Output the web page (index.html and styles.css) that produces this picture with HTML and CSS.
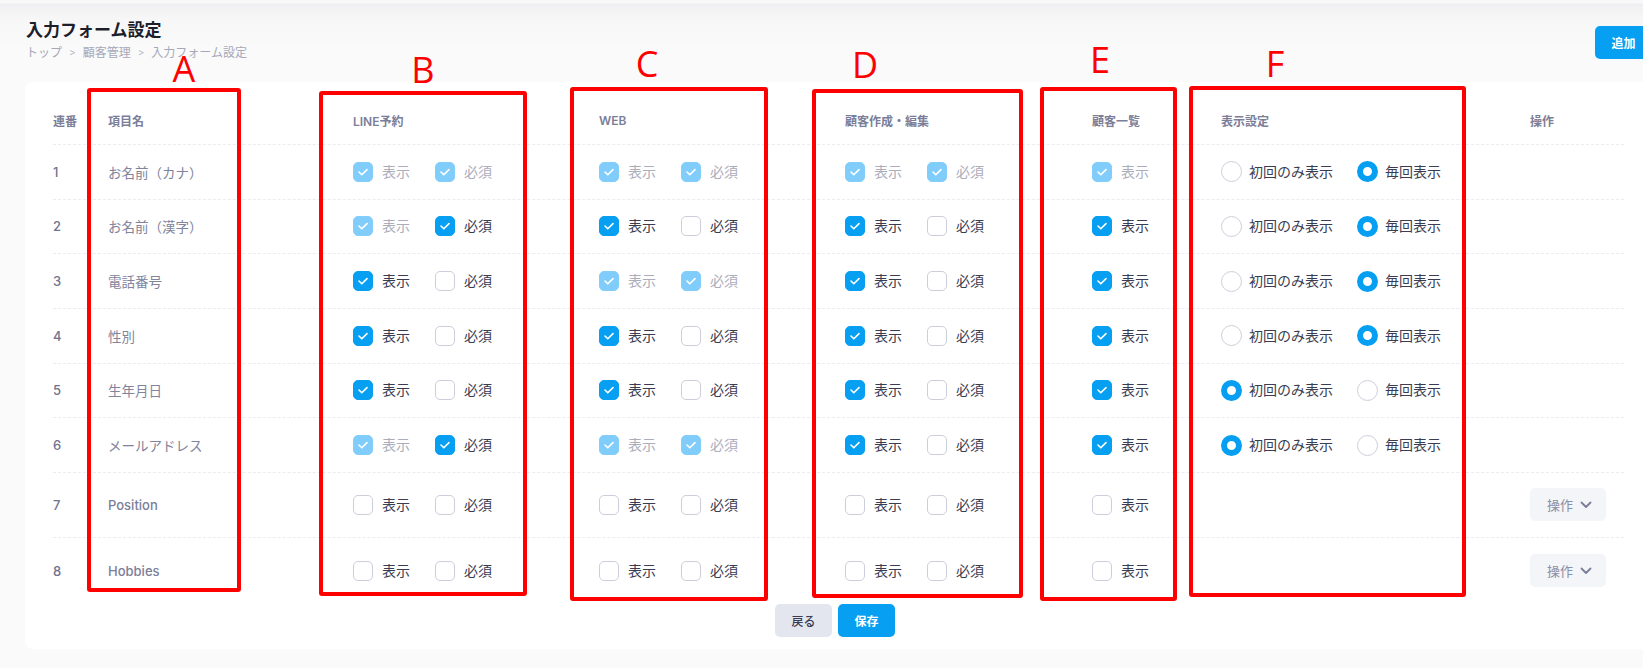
FILE: index.html
```html
<!DOCTYPE html>
<html lang="ja">
<head>
<meta charset="utf-8">
<title>入力フォーム設定</title>
<link rel="stylesheet" href="styles.css">
</head>
<body>
<div class="page">
  <header class="head">
    <div class="head-text">
      <h1 class="title">入力フォーム設定</h1>
      <nav class="crumbs"><span>トップ</span><span class="sep">&gt;</span><span>顧客管理</span><span class="sep">&gt;</span><span>入力フォーム設定</span></nav>
    </div>
    <button class="btn btn-primary add">追加</button>
  </header>

  <section class="card">
    <div class="row hrow">
      <div class="hc">連番</div>
      <div class="hc">項目名</div>
      <div class="hc">LINE予約</div>
      <div class="hc">WEB</div>
      <div class="hc">顧客作成・編集</div>
      <div class="hc">顧客一覧</div>
      <div class="hc">表示設定</div>
      <div class="hc">操作</div>
    </div>

    <!-- 1 -->
    <div class="row r">
      <div class="num">1</div>
      <div class="name">お名前（カナ）</div>
      <div class="opts">
        <span class="opt dis"><span class="cb on"><svg viewBox="0 0 20 20"><polyline points="6,10 8.8,12.8 14,7.6"/></svg></span><span class="lbl">表示</span></span>
        <span class="opt dis"><span class="cb on"><svg viewBox="0 0 20 20"><polyline points="6,10 8.8,12.8 14,7.6"/></svg></span><span class="lbl">必須</span></span>
      </div>
      <div class="opts">
        <span class="opt dis"><span class="cb on"><svg viewBox="0 0 20 20"><polyline points="6,10 8.8,12.8 14,7.6"/></svg></span><span class="lbl">表示</span></span>
        <span class="opt dis"><span class="cb on"><svg viewBox="0 0 20 20"><polyline points="6,10 8.8,12.8 14,7.6"/></svg></span><span class="lbl">必須</span></span>
      </div>
      <div class="opts">
        <span class="opt dis"><span class="cb on"><svg viewBox="0 0 20 20"><polyline points="6,10 8.8,12.8 14,7.6"/></svg></span><span class="lbl">表示</span></span>
        <span class="opt dis"><span class="cb on"><svg viewBox="0 0 20 20"><polyline points="6,10 8.8,12.8 14,7.6"/></svg></span><span class="lbl">必須</span></span>
      </div>
      <div class="opts">
        <span class="opt dis"><span class="cb on"><svg viewBox="0 0 20 20"><polyline points="6,10 8.8,12.8 14,7.6"/></svg></span><span class="lbl">表示</span></span>
      </div>
      <div class="opts radios">
        <span class="opt"><span class="rd"></span><span class="lbl">初回のみ表示</span></span>
        <span class="opt"><span class="rd on"></span><span class="lbl">毎回表示</span></span>
      </div>
      <div></div>
    </div>

    <!-- 2 -->
    <div class="row r">
      <div class="num">2</div>
      <div class="name">お名前（漢字）</div>
      <div class="opts">
        <span class="opt dis"><span class="cb on"><svg viewBox="0 0 20 20"><polyline points="6,10 8.8,12.8 14,7.6"/></svg></span><span class="lbl">表示</span></span>
        <span class="opt"><span class="cb on"><svg viewBox="0 0 20 20"><polyline points="6,10 8.8,12.8 14,7.6"/></svg></span><span class="lbl">必須</span></span>
      </div>
      <div class="opts">
        <span class="opt"><span class="cb on"><svg viewBox="0 0 20 20"><polyline points="6,10 8.8,12.8 14,7.6"/></svg></span><span class="lbl">表示</span></span>
        <span class="opt"><span class="cb"></span><span class="lbl">必須</span></span>
      </div>
      <div class="opts">
        <span class="opt"><span class="cb on"><svg viewBox="0 0 20 20"><polyline points="6,10 8.8,12.8 14,7.6"/></svg></span><span class="lbl">表示</span></span>
        <span class="opt"><span class="cb"></span><span class="lbl">必須</span></span>
      </div>
      <div class="opts">
        <span class="opt"><span class="cb on"><svg viewBox="0 0 20 20"><polyline points="6,10 8.8,12.8 14,7.6"/></svg></span><span class="lbl">表示</span></span>
      </div>
      <div class="opts radios">
        <span class="opt"><span class="rd"></span><span class="lbl">初回のみ表示</span></span>
        <span class="opt"><span class="rd on"></span><span class="lbl">毎回表示</span></span>
      </div>
      <div></div>
    </div>

    <!-- 3 -->
    <div class="row r">
      <div class="num">3</div>
      <div class="name">電話番号</div>
      <div class="opts">
        <span class="opt"><span class="cb on"><svg viewBox="0 0 20 20"><polyline points="6,10 8.8,12.8 14,7.6"/></svg></span><span class="lbl">表示</span></span>
        <span class="opt"><span class="cb"></span><span class="lbl">必須</span></span>
      </div>
      <div class="opts">
        <span class="opt dis"><span class="cb on"><svg viewBox="0 0 20 20"><polyline points="6,10 8.8,12.8 14,7.6"/></svg></span><span class="lbl">表示</span></span>
        <span class="opt dis"><span class="cb on"><svg viewBox="0 0 20 20"><polyline points="6,10 8.8,12.8 14,7.6"/></svg></span><span class="lbl">必須</span></span>
      </div>
      <div class="opts">
        <span class="opt"><span class="cb on"><svg viewBox="0 0 20 20"><polyline points="6,10 8.8,12.8 14,7.6"/></svg></span><span class="lbl">表示</span></span>
        <span class="opt"><span class="cb"></span><span class="lbl">必須</span></span>
      </div>
      <div class="opts">
        <span class="opt"><span class="cb on"><svg viewBox="0 0 20 20"><polyline points="6,10 8.8,12.8 14,7.6"/></svg></span><span class="lbl">表示</span></span>
      </div>
      <div class="opts radios">
        <span class="opt"><span class="rd"></span><span class="lbl">初回のみ表示</span></span>
        <span class="opt"><span class="rd on"></span><span class="lbl">毎回表示</span></span>
      </div>
      <div></div>
    </div>

    <!-- 4 -->
    <div class="row r">
      <div class="num">4</div>
      <div class="name">性別</div>
      <div class="opts">
        <span class="opt"><span class="cb on"><svg viewBox="0 0 20 20"><polyline points="6,10 8.8,12.8 14,7.6"/></svg></span><span class="lbl">表示</span></span>
        <span class="opt"><span class="cb"></span><span class="lbl">必須</span></span>
      </div>
      <div class="opts">
        <span class="opt"><span class="cb on"><svg viewBox="0 0 20 20"><polyline points="6,10 8.8,12.8 14,7.6"/></svg></span><span class="lbl">表示</span></span>
        <span class="opt"><span class="cb"></span><span class="lbl">必須</span></span>
      </div>
      <div class="opts">
        <span class="opt"><span class="cb on"><svg viewBox="0 0 20 20"><polyline points="6,10 8.8,12.8 14,7.6"/></svg></span><span class="lbl">表示</span></span>
        <span class="opt"><span class="cb"></span><span class="lbl">必須</span></span>
      </div>
      <div class="opts">
        <span class="opt"><span class="cb on"><svg viewBox="0 0 20 20"><polyline points="6,10 8.8,12.8 14,7.6"/></svg></span><span class="lbl">表示</span></span>
      </div>
      <div class="opts radios">
        <span class="opt"><span class="rd"></span><span class="lbl">初回のみ表示</span></span>
        <span class="opt"><span class="rd on"></span><span class="lbl">毎回表示</span></span>
      </div>
      <div></div>
    </div>

    <!-- 5 -->
    <div class="row r">
      <div class="num">5</div>
      <div class="name">生年月日</div>
      <div class="opts">
        <span class="opt"><span class="cb on"><svg viewBox="0 0 20 20"><polyline points="6,10 8.8,12.8 14,7.6"/></svg></span><span class="lbl">表示</span></span>
        <span class="opt"><span class="cb"></span><span class="lbl">必須</span></span>
      </div>
      <div class="opts">
        <span class="opt"><span class="cb on"><svg viewBox="0 0 20 20"><polyline points="6,10 8.8,12.8 14,7.6"/></svg></span><span class="lbl">表示</span></span>
        <span class="opt"><span class="cb"></span><span class="lbl">必須</span></span>
      </div>
      <div class="opts">
        <span class="opt"><span class="cb on"><svg viewBox="0 0 20 20"><polyline points="6,10 8.8,12.8 14,7.6"/></svg></span><span class="lbl">表示</span></span>
        <span class="opt"><span class="cb"></span><span class="lbl">必須</span></span>
      </div>
      <div class="opts">
        <span class="opt"><span class="cb on"><svg viewBox="0 0 20 20"><polyline points="6,10 8.8,12.8 14,7.6"/></svg></span><span class="lbl">表示</span></span>
      </div>
      <div class="opts radios">
        <span class="opt"><span class="rd on"></span><span class="lbl">初回のみ表示</span></span>
        <span class="opt"><span class="rd"></span><span class="lbl">毎回表示</span></span>
      </div>
      <div></div>
    </div>

    <!-- 6 -->
    <div class="row r">
      <div class="num">6</div>
      <div class="name">メールアドレス</div>
      <div class="opts">
        <span class="opt dis"><span class="cb on"><svg viewBox="0 0 20 20"><polyline points="6,10 8.8,12.8 14,7.6"/></svg></span><span class="lbl">表示</span></span>
        <span class="opt"><span class="cb on"><svg viewBox="0 0 20 20"><polyline points="6,10 8.8,12.8 14,7.6"/></svg></span><span class="lbl">必須</span></span>
      </div>
      <div class="opts">
        <span class="opt dis"><span class="cb on"><svg viewBox="0 0 20 20"><polyline points="6,10 8.8,12.8 14,7.6"/></svg></span><span class="lbl">表示</span></span>
        <span class="opt dis"><span class="cb on"><svg viewBox="0 0 20 20"><polyline points="6,10 8.8,12.8 14,7.6"/></svg></span><span class="lbl">必須</span></span>
      </div>
      <div class="opts">
        <span class="opt"><span class="cb on"><svg viewBox="0 0 20 20"><polyline points="6,10 8.8,12.8 14,7.6"/></svg></span><span class="lbl">表示</span></span>
        <span class="opt"><span class="cb"></span><span class="lbl">必須</span></span>
      </div>
      <div class="opts">
        <span class="opt"><span class="cb on"><svg viewBox="0 0 20 20"><polyline points="6,10 8.8,12.8 14,7.6"/></svg></span><span class="lbl">表示</span></span>
      </div>
      <div class="opts radios">
        <span class="opt"><span class="rd on"></span><span class="lbl">初回のみ表示</span></span>
        <span class="opt"><span class="rd"></span><span class="lbl">毎回表示</span></span>
      </div>
      <div></div>
    </div>

    <!-- 7 -->
    <div class="row r tall">
      <div class="num">7</div>
      <div class="name latin">Position</div>
      <div class="opts">
        <span class="opt"><span class="cb"></span><span class="lbl">表示</span></span>
        <span class="opt"><span class="cb"></span><span class="lbl">必須</span></span>
      </div>
      <div class="opts">
        <span class="opt"><span class="cb"></span><span class="lbl">表示</span></span>
        <span class="opt"><span class="cb"></span><span class="lbl">必須</span></span>
      </div>
      <div class="opts">
        <span class="opt"><span class="cb"></span><span class="lbl">表示</span></span>
        <span class="opt"><span class="cb"></span><span class="lbl">必須</span></span>
      </div>
      <div class="opts">
        <span class="opt"><span class="cb"></span><span class="lbl">表示</span></span>
      </div>
      <div></div>
      <div><button class="ops">操作<svg class="chev" viewBox="0 0 12 8"><polyline points="1.5,1.5 6,6 10.5,1.5"/></svg></button></div>
    </div>

    <!-- 8 -->
    <div class="row r last">
      <div class="num">8</div>
      <div class="name latin">Hobbies</div>
      <div class="opts">
        <span class="opt"><span class="cb"></span><span class="lbl">表示</span></span>
        <span class="opt"><span class="cb"></span><span class="lbl">必須</span></span>
      </div>
      <div class="opts">
        <span class="opt"><span class="cb"></span><span class="lbl">表示</span></span>
        <span class="opt"><span class="cb"></span><span class="lbl">必須</span></span>
      </div>
      <div class="opts">
        <span class="opt"><span class="cb"></span><span class="lbl">表示</span></span>
        <span class="opt"><span class="cb"></span><span class="lbl">必須</span></span>
      </div>
      <div class="opts">
        <span class="opt"><span class="cb"></span><span class="lbl">表示</span></span>
      </div>
      <div></div>
      <div><button class="ops">操作<svg class="chev" viewBox="0 0 12 8"><polyline points="1.5,1.5 6,6 10.5,1.5"/></svg></button></div>
    </div>

    <div class="foot">
      <button class="btn btn-gray">戻る</button>
      <button class="btn btn-primary">保存</button>
    </div>
  </section>

  <div class="ann-box box-a"></div>
  <div class="ann-box box-b"></div>
  <div class="ann-box box-c"></div>
  <div class="ann-box box-d"></div>
  <div class="ann-box box-e"></div>
  <div class="ann-box box-f"></div>
  <span class="ann-letter let-a">A</span>
  <span class="ann-letter let-b">B</span>
  <span class="ann-letter let-c">C</span>
  <span class="ann-letter let-d">D</span>
  <span class="ann-letter let-e">E</span>
  <span class="ann-letter let-f">F</span>
</div>
</body>
</html>
```

FILE: styles.css
```css
* { box-sizing: border-box; margin: 0; padding: 0; }
html, body { overflow: hidden; }
body {
  font-family: Inter, "Noto Sans CJK JP", sans-serif;
  background: linear-gradient(to bottom, #f8f8f9 0, #f8f8f9 3px, #efeff1 4px, #f7f7f8 20px, #fafafa 50px) no-repeat, #fafafa;
  background-size: 100% 80px, auto;
  color: #3a3c51;
}
.page {
  position: relative;
  width: 1677px;
  padding: 18px 25px 0;
}

/* header */
.head {
  display: flex;
  justify-content: space-between;
  align-items: flex-start;
  height: 64px;
}
.title {
  font-size: 17px;
  line-height: 24px;
  font-weight: 700;
  color: #1d1e2c;
  padding-left: 1px;
}
.crumbs {
  display: flex;
  align-items: center;
  margin-top: 5px;
  font-size: 12px;
  line-height: 11px;
  color: #a6a8b9;
  padding-left: 1px;
}
.crumbs .sep { font-size: 10px; margin: 0 7px; color: #b4b6c4; }

.btn {
  font-family: inherit;
  border: none;
  border-radius: 5px;
  height: 33px;
  width: 57px;
  font-size: 12px;
  font-weight: 600;
  cursor: pointer;
}
.btn-primary { background: #069ff1; color: #fff; }
.btn-gray { background: #e3e6ef; color: #3a3c51; font-weight: 500; }
.add { margin-top: 8px; }

/* card */
.card {
  background: #fff;
  border-radius: 8px;
  padding: 14px 28px 12px;
}
.row {
  display: grid;
  grid-template-columns: 55px 245px 246px 246px 247px 129px 309px 94px;
  align-items: center;
  border-bottom: 1px dashed #ebecf2;
}
.hrow { height: 49px; }
.hc {
  font-size: 12px;
  font-weight: 600;
  color: #7b7e98;
}
.r { height: 54.67px; }
.r.tall { height: 65px; }
.r.last { height: 66px; border-bottom: none; }

.num {
  font-size: 13px;
  font-weight: 500;
  color: #70738f;
}
.name {
  font-size: 13.5px;
  color: #80849c;
}
.name.latin { font-size: 13px; font-weight: 500; color: #7b7e98; }

.opts { display: flex; align-items: center; gap: 25px; }
.opts.radios { gap: 24px; }
.opt { display: flex; align-items: center; gap: 9px; }
.lbl { font-size: 14px; line-height: 20px; color: #3a3c51; }
.opt.dis .lbl { color: #abadbb; }

.cb {
  width: 20px;
  height: 20px;
  border-radius: 5px;
  border: 1px solid #cdcedb;
  background: #fff;
  display: flex;
  align-items: center;
  justify-content: center;
}
.cb svg { width: 20px; height: 20px; flex: none; }
.cb svg polyline { fill: none; stroke: #fff; stroke-width: 1.6; stroke-linecap: round; stroke-linejoin: round; }
.cb.on { background: #069ff1; border-color: #069ff1; }
.opt.dis .cb.on { background: #80cdfc; border-color: #84cefb; }

.radios .opt { gap: 7px; }
.rd {
  width: 21px;
  height: 21px;
  border-radius: 50%;
  border: 1px solid #cdcedb;
  background: #fff;
}
.rd.on { border: 6px solid #069ff1; }

.ops {
  display: flex;
  align-items: center;
  gap: 7px;
  width: 76px;
  height: 33px;
  padding-left: 17px;
  border: none;
  border-radius: 5px;
  background: #f3f5f9;
  font-family: inherit;
  font-size: 13px;
  color: #8a8ea6;
}
.chev { width: 12px; height: 8px; }
.chev polyline { fill: none; stroke: #7b7e98; stroke-width: 1.8; stroke-linecap: round; stroke-linejoin: round; }

.foot {
  display: flex;
  justify-content: center;
  gap: 6px;
  padding-right: 7px;
}

/* annotations drawn over the screenshot */
.ann-box {
  position: absolute;
  border: 4px solid #ff0000;
  border-radius: 3px;
}
.box-a { left: 87px; top: 88px; width: 154px; height: 504px; }
.box-b { left: 319px; top: 91px; width: 208px; height: 505px; }
.box-c { left: 570px; top: 87px; width: 198px; height: 514px; }
.box-d { left: 812px; top: 89px; width: 211px; height: 509px; }
.box-e { left: 1040px; top: 87px; width: 137px; height: 514px; }
.box-f { left: 1189px; top: 86px; width: 277px; height: 511px; }

.ann-letter {
  position: absolute;
  width: 40px;
  text-align: center;
  font-family: "Open Sans", "Liberation Sans", sans-serif;
  font-size: 36px;
  line-height: 22px;
  color: #ff0000;
}
.let-a { left: 164px; top: 58px; }
.let-b { left: 403px; top: 59px; }
.let-c { left: 627px; top: 53px; }
.let-d { left: 845px; top: 54px; }
.let-e { left: 1080px; top: 49px; }
.let-f { left: 1255px; top: 53px; }
```
